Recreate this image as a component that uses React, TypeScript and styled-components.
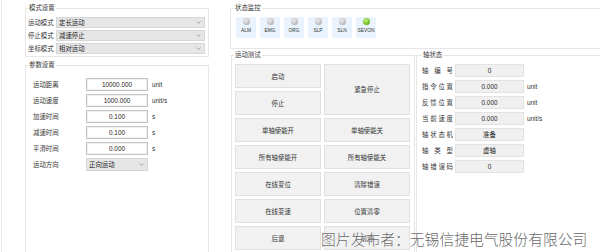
import React from 'react';
import styled, { createGlobalStyle } from 'styled-components';

const Global = createGlobalStyle`
  html, body { margin: 0; padding: 0; background: #fff; }
  *, *::before, *::after { box-sizing: border-box; }
`;

const FONT = `"Liberation Sans", "Noto Sans CJK SC", sans-serif`;

const Page = styled.div`
  position: relative;
  width: 600px;
  height: 252px;
  overflow: hidden;
  display: flex;
  align-items: flex-start;
  background: #fff;
  font-family: ${FONT};
  font-size: 6.4px;
  color: #333;
`;

const LeftCol = styled.div`
  margin-left: 1px;
  width: 209px;
  height: 270px;
  border-left: 1px solid #ececec;
  padding-left: 23px;
  display: flex;
  flex-direction: column;
`;

const RightCol = styled.div`
  margin-left: 21px;
  width: 380px;
  display: flex;
  flex-direction: column;
`;

const Group = styled.fieldset<{ $pad: string; $mt?: number; $grow?: boolean; $w?: number; $h?: number; $ml?: number }>`
  margin: ${(p) => p.$mt ?? 0}px 0 0 ${(p) => p.$ml ?? 0}px;
  border: 1px solid #e6e6e6;
  padding: ${(p) => p.$pad};
  min-width: 0;
  ${(p) => (p.$w ? `width: ${p.$w}px; flex: none;` : '')}
  ${(p) => (p.$h ? `height: ${p.$h}px;` : '')}
  ${(p) => (p.$grow ? 'flex: 1;' : '')}
`;

const Legend = styled.legend<{ $ml?: number }>`
  padding: 0 1px;
  margin-left: ${(p) => p.$ml ?? 0}px;
  font-size: 6.4px;
  line-height: 8px;
  color: #333;
`;

/* ---------- mode settings ---------- */
const FormRows = styled.div<{ $gap: number }>`
  display: flex;
  flex-direction: column;
  gap: ${(p) => p.$gap}px;
`;

const FormRow = styled.div<{ $h: number }>`
  display: flex;
  align-items: center;
  height: ${(p) => p.$h}px;
`;

const FieldLabel = styled.span<{ $w: number }>`
  width: ${(p) => p.$w}px;
  flex: none;
  white-space: nowrap;
  color: #333;
`;

const Select = styled.div<{ $w: number; $h: number }>`
  width: ${(p) => p.$w}px;
  height: ${(p) => p.$h}px;
  display: flex;
  align-items: center;
  justify-content: space-between;
  padding: 0 3px 0 2px;
  background: #e6e6e6;
  border: 1px solid #d6d6d6;
  color: #222;
`;

const Chevron = () => (
  <svg width="5" height="3" viewBox="0 0 5 3">
    <path d="M0.5 0.5 L2.5 2.5 L4.5 0.5" fill="none" stroke="#8a8a8a" strokeWidth="0.7" />
  </svg>
);

/* ---------- params ---------- */
const NumInput = styled.div`
  width: 62px;
  height: 13px;
  flex: none;
  display: flex;
  align-items: center;
  justify-content: center;
  background: #fff;
  border: 1px solid #c4c4c4;
  box-shadow: inset 0 0 0 1px #f1f1f1;
  color: #222;
`;

const Unit = styled.span<{ $ml: number }>`
  margin-left: ${(p) => p.$ml}px;
  color: #333;
  white-space: nowrap;
`;

/* ---------- status monitor ---------- */
const LedRow = styled.div`
  display: flex;
  gap: 4px;
`;

const LedTile = styled.div`
  width: 20px;
  height: 21px;
  background: #e8f3fd;
  display: flex;
  flex-direction: column;
  align-items: center;
  padding-top: 1px;
  gap: 3px;
`;

const Led = styled.span<{ $on?: boolean }>`
  width: 7px;
  height: 7px;
  border-radius: 50%;
  background: ${(p) =>
    p.$on
      ? 'radial-gradient(circle at 40% 35%, #c4f27a 0%, #7cc42c 55%, #4f9614 100%)'
      : 'radial-gradient(circle at 40% 35%, #ececec 0%, #c4c4c4 55%, #9f9f9f 100%)'};
`;

const LedText = styled.span`
  font-size: 4.8px;
  line-height: 6px;
  color: #333;
`;

/* ---------- motion test ---------- */
const BottomRow = styled.div`
  display: flex;
  margin-top: 2px;
  align-items: flex-start;
`;

const ButtonGrid = styled.div`
  display: grid;
  grid-template-columns: 86px 86px;
  grid-auto-rows: 24px;
  gap: 3px;
`;

const Btn = styled.button<{ $span?: number }>`
  margin: 0;
  padding: 0;
  font-family: ${FONT};
  font-size: 6.4px;
  color: #333;
  background: #f1f1f1;
  border: 1px solid #e1e1e1;
  ${(p) => (p.$span ? `grid-row: span ${p.$span};` : '')}
`;

/* ---------- axis state ---------- */
const AxisLabel = styled.span`
  width: 31px;
  flex: none;
  text-align: justify;
  text-align-last: justify;
  color: #333;
  white-space: nowrap;
`;

const ValueBox = styled.div`
  width: 69px;
  height: 13px;
  margin-left: 2px;
  flex: none;
  display: flex;
  align-items: center;
  justify-content: center;
  background: #f0f0f0;
  border: 1px solid #e3e3e3;
  color: #222;
`;

const Watermark = styled.div`
  position: absolute;
  left: 321px;
  top: 229px;
  font-family: "Noto Sans CJK SC", sans-serif;
  font-weight: 300;
  font-size: 14.8px;
  line-height: 20px;
  color: #6a6a6a;
  white-space: nowrap;
  text-shadow: 0 0 1px #fff, 0 0 1px #fff;
`;

const modes = [
  ['运动模式', '定长运动'],
  ['停止模式', '减速停止'],
  ['坐标模式', '相对运动'],
];

const params = [
  ['运动距离', '10000.000', 'unit'],
  ['运动速度', '1000.000', 'unit/s'],
  ['加速时间', '0.100', 's'],
  ['减速时间', '0.100', 's'],
  ['平滑时间', '0.000', 's'],
];

const leds = ['ALM', 'EMG', 'ORG', 'SLP', 'SLN', 'SEVON'];

const axis: [string, string, string?][] = [
  ['轴编号', '0'],
  ['指令位置', '0.000', 'unit'],
  ['反馈位置', '0.000', 'unit'],
  ['当前速度', '0.000', 'unit/s'],
  ['轴状态机', '准备'],
  ['轴类型', '虚轴'],
  ['轴错误码', '0'],
];

export default function App() {
  return (
    <Page>
      <Global />
      <LeftCol>
        <Group $pad="5px 3px 2px 2px" $mt={4}>
          <Legend $ml={0}>模式设置</Legend>
          <FormRows $gap={2}>
            {modes.map(([l, v]) => (
              <FormRow key={l} $h={11}>
                <FieldLabel $w={28}>{l}</FieldLabel>
                <Select $w={149} $h={11}>
                  <span>{v}</span>
                  <Chevron />
                </Select>
              </FormRow>
            ))}
          </FormRows>
        </Group>
        <Group $pad="9px 3px 2px 7px" $mt={4} $grow>
          <Legend $ml={-5}>参数设置</Legend>
          <FormRows $gap={3}>
            {params.map(([l, v, u]) => (
              <FormRow key={l} $h={13}>
                <FieldLabel $w={53}>{l}</FieldLabel>
                <NumInput>{v}</NumInput>
                <Unit $ml={4}>{u}</Unit>
              </FormRow>
            ))}
            <FormRow $h={13}>
              <FieldLabel $w={53}>运动方向</FieldLabel>
              <Select $w={62} $h={13}>
                <span>正向运动</span>
                <Chevron />
              </Select>
            </FormRow>
          </FormRows>
        </Group>
      </LeftCol>
      <RightCol>
        <Group $pad="5px 5px 10px 5px" $mt={4}>
          <Legend $ml={-2}>状态监控</Legend>
          <LedRow>
            {leds.map((n) => (
              <LedTile key={n}>
                <Led $on={n === 'SEVON'} />
                <LedText>{n}</LedText>
              </LedTile>
            ))}
          </LedRow>
        </Group>
        <BottomRow>
          <Group $pad="5px 4px 3px 3px" $w={184} $ml={1}>
            <Legend $ml={-1}>运动测试</Legend>
            <ButtonGrid>
              <Btn>启动</Btn>
              <Btn $span={2}>紧急停止</Btn>
              <Btn>停止</Btn>
              <Btn>单轴使能开</Btn>
              <Btn>单轴使能关</Btn>
              <Btn>所有轴使能开</Btn>
              <Btn>所有轴使能关</Btn>
              <Btn>在线变位</Btn>
              <Btn>清除错误</Btn>
              <Btn>在线变速</Btn>
              <Btn>位置清零</Btn>
              <Btn>后退</Btn>
              <Btn>前进</Btn>
            </ButtonGrid>
          </Group>
          <Group $pad="5px 5px 3px 5px" $w={190} $h={230} $ml={1}>
            <Legend $ml={0}>轴状态</Legend>
            <FormRows $gap={3}>
              {axis.map(([l, v, u]) => (
                <FormRow key={l} $h={13}>
                  <AxisLabel>{l}</AxisLabel>
                  <ValueBox>{v}</ValueBox>
                  {u && <Unit $ml={3}>{u}</Unit>}
                </FormRow>
              ))}
            </FormRows>
          </Group>
        </BottomRow>
      </RightCol>
      <Watermark>图片发布者：无锡信捷电气股份有限公司</Watermark>
    </Page>
  );
}
